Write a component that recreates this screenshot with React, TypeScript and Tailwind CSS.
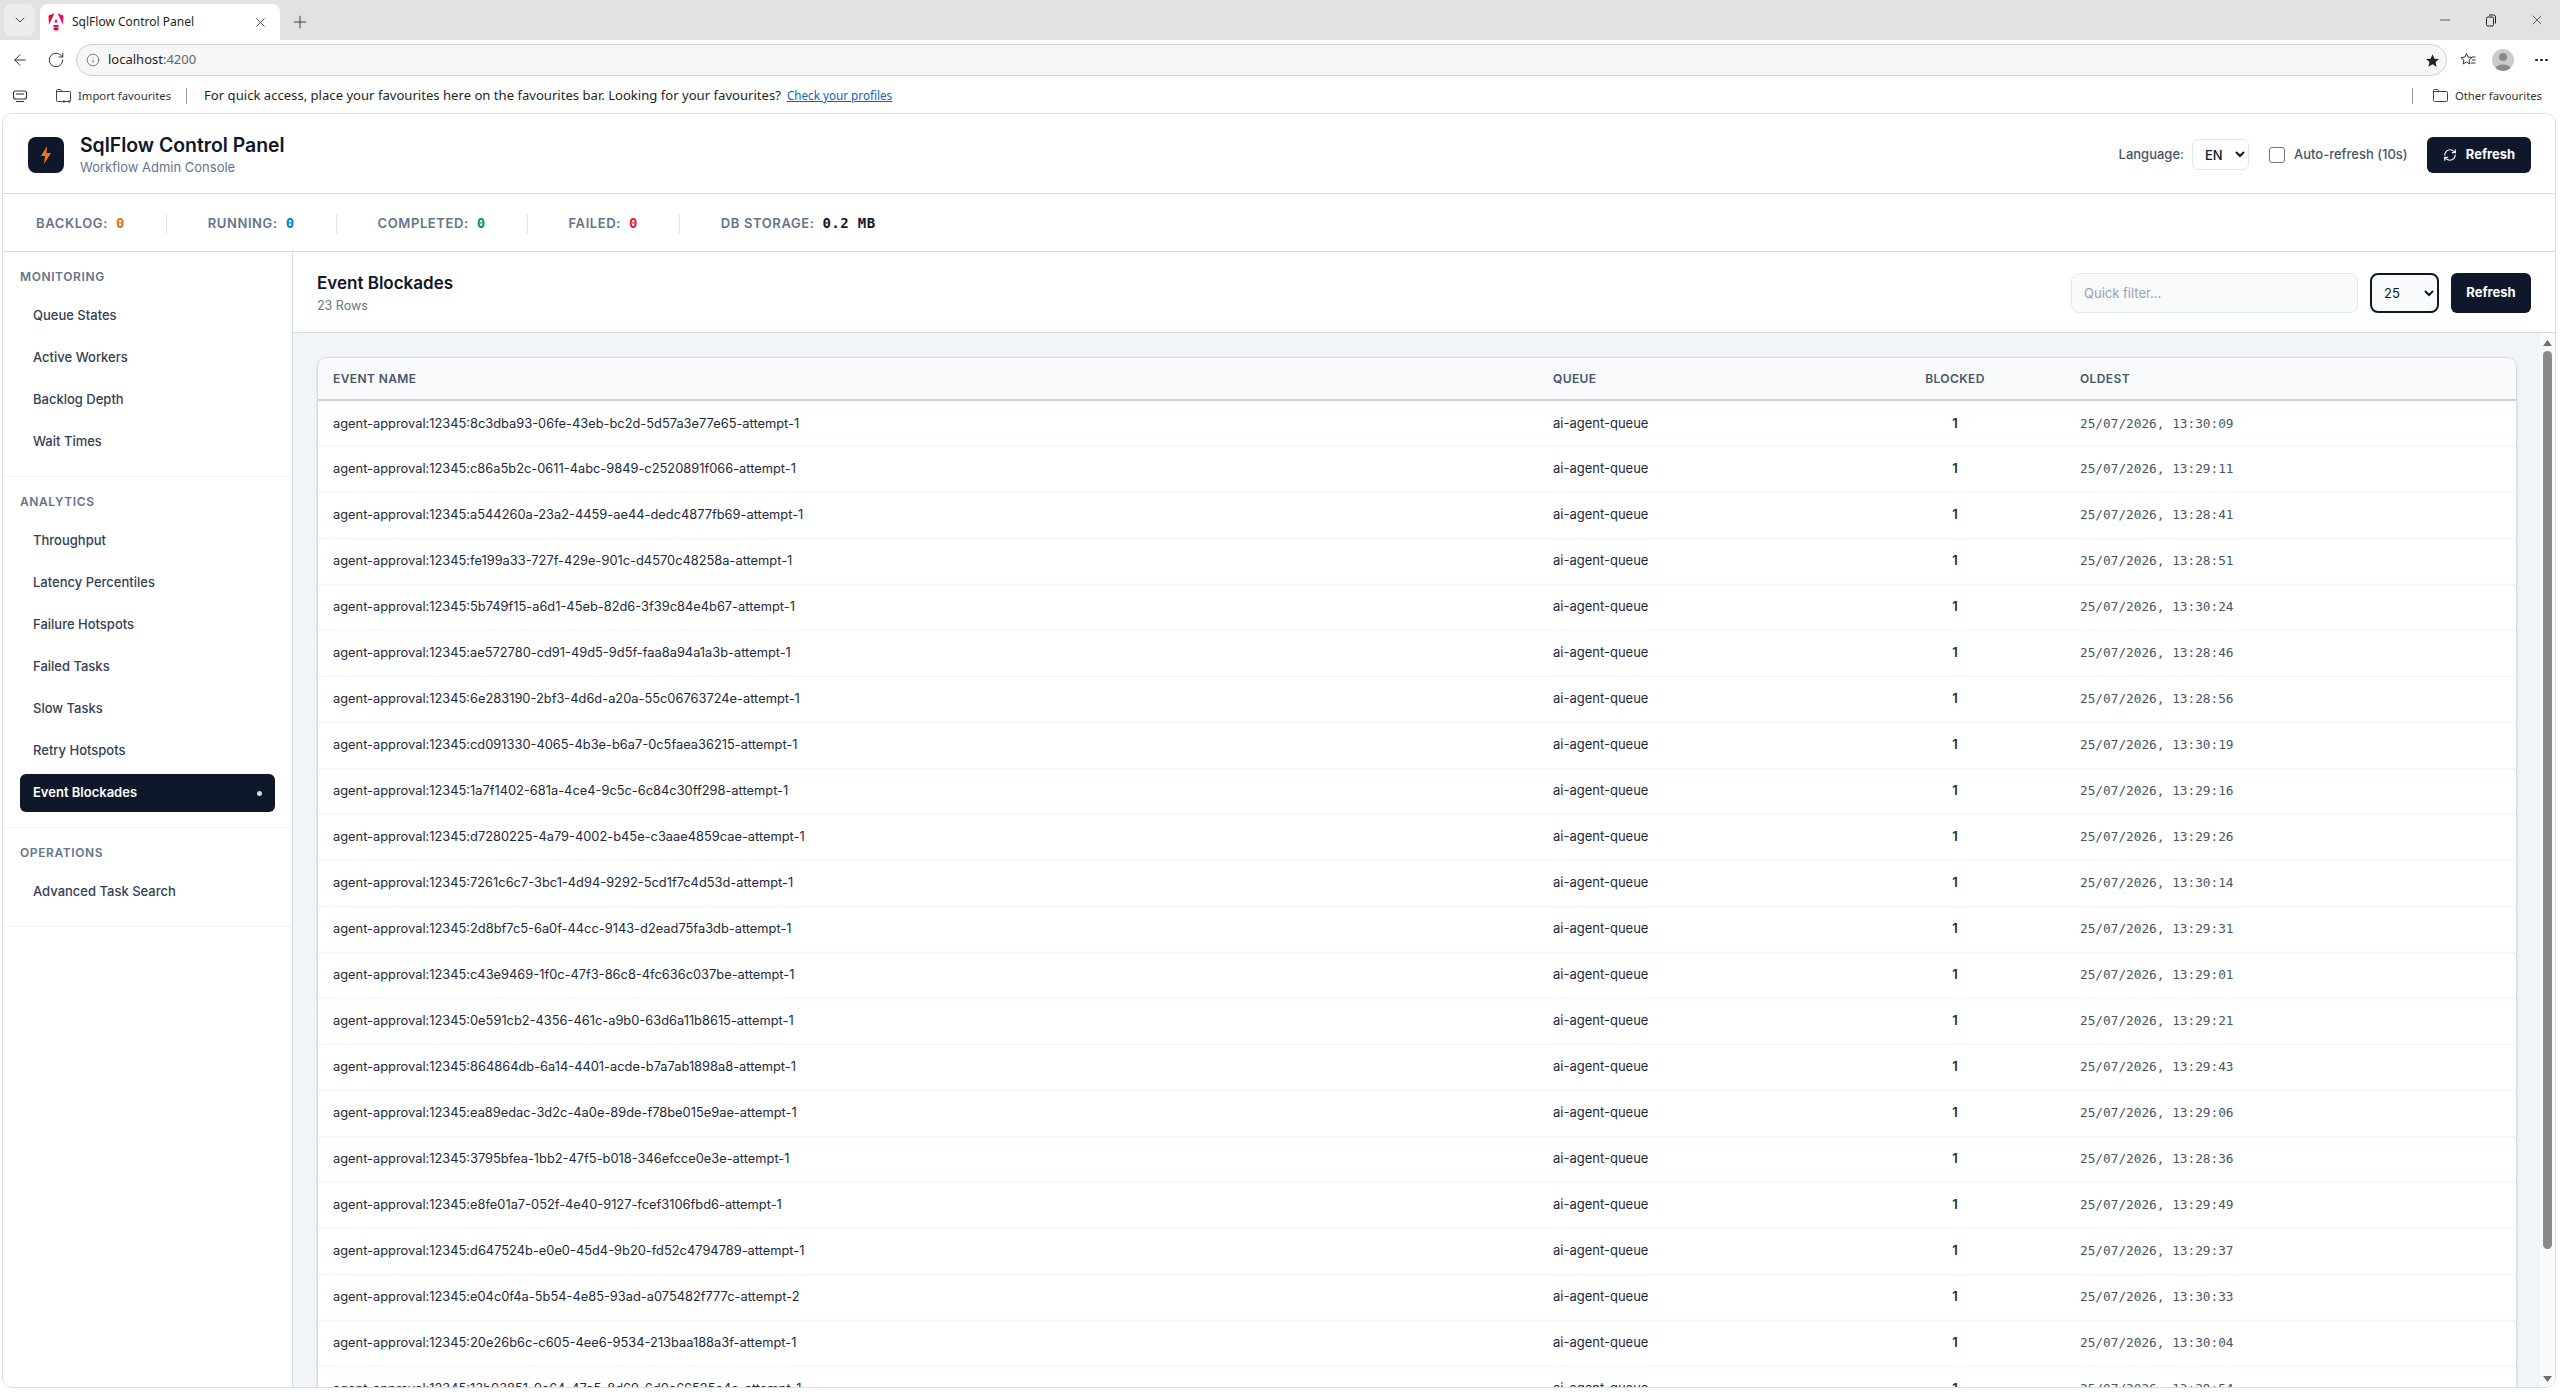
import React from "react";
import { ChevronDown, X, Plus, ArrowLeft, RotateCw, Info, Minus, RefreshCw } from "lucide-react";

const rows: [string, string][] = [
  ["8c3dba93-06fe-43eb-bc2d-5d57a3e77e65-attempt-1", "13:30:09"],
  ["c86a5b2c-0611-4abc-9849-c2520891f066-attempt-1", "13:29:11"],
  ["a544260a-23a2-4459-ae44-dedc4877fb69-attempt-1", "13:28:41"],
  ["fe199a33-727f-429e-901c-d4570c48258a-attempt-1", "13:28:51"],
  ["5b749f15-a6d1-45eb-82d6-3f39c84e4b67-attempt-1", "13:30:24"],
  ["ae572780-cd91-49d5-9d5f-faa8a94a1a3b-attempt-1", "13:28:46"],
  ["6e283190-2bf3-4d6d-a20a-55c06763724e-attempt-1", "13:28:56"],
  ["cd091330-4065-4b3e-b6a7-0c5faea36215-attempt-1", "13:30:19"],
  ["1a7f1402-681a-4ce4-9c5c-6c84c30ff298-attempt-1", "13:29:16"],
  ["d7280225-4a79-4002-b45e-c3aae4859cae-attempt-1", "13:29:26"],
  ["7261c6c7-3bc1-4d94-9292-5cd1f7c4d53d-attempt-1", "13:30:14"],
  ["2d8bf7c5-6a0f-44cc-9143-d2ead75fa3db-attempt-1", "13:29:31"],
  ["c43e9469-1f0c-47f3-86c8-4fc636c037be-attempt-1", "13:29:01"],
  ["0e591cb2-4356-461c-a9b0-63d6a11b8615-attempt-1", "13:29:21"],
  ["864864db-6a14-4401-acde-b7a7ab1898a8-attempt-1", "13:29:43"],
  ["ea89edac-3d2c-4a0e-89de-f78be015e9ae-attempt-1", "13:29:06"],
  ["3795bfea-1bb2-47f5-b018-346efcce0e3e-attempt-1", "13:28:36"],
  ["e8fe01a7-052f-4e40-9127-fcef3106fbd6-attempt-1", "13:29:49"],
  ["d647524b-e0e0-45d4-9b20-fd52c4794789-attempt-1", "13:29:37"],
  ["e04c0f4a-5b54-4e85-93ad-a075482f777c-attempt-2", "13:30:33"],
  ["20e26b6c-c605-4ee6-9534-213baa188a3f-attempt-1", "13:30:04"],
  ["13b03851-9a64-47a5-8d69-6d0c66525e4e-attempt-1", "13:29:54"],
];

const nav = [
  { title: "Monitoring", items: ["Queue States", "Active Workers", "Backlog Depth", "Wait Times"] },
  { title: "Analytics", items: ["Throughput", "Latency Percentiles", "Failure Hotspots", "Failed Tasks", "Slow Tasks", "Retry Hotspots", "Event Blockades"] },
  { title: "Operations", items: ["Advanced Task Search"] },
];

const stats = [
  { label: "Backlog:", value: "0", color: "text-[#d97706]" },
  { label: "Running:", value: "0", color: "text-[#0284c7]" },
  { label: "Completed:", value: "0", color: "text-[#059669]" },
  { label: "Failed:", value: "0", color: "text-[#e11d48]" },
  { label: "DB Storage:", value: "0.2 MB", color: "text-[#0f172a]" },
];

function AngularIcon() {
  return (
    <svg width="16" height="18" viewBox="0 0 16 18">
      <defs>
        <linearGradient id="ng" x1="0" y1="0" x2="1" y2="1">
          <stop offset="0" stopColor="#e40035" />
          <stop offset="0.5" stopColor="#f60a48" />
          <stop offset="1" stopColor="#a719ea" />
        </linearGradient>
      </defs>
      <path d="M15.5 2.8 15 11.8 9.6 0.2ZM11 13.4l-3 1.7-3-1.7.6-1.5h4.8ZM8 5.4l1.7 4.2H6.3ZM.5 2.8 6.4.2 1 11.8Z" fill="url(#ng)" />
      <path d="M5 15h6l-1.5 2.5h-3Z" fill="#e40035" />
    </svg>
  );
}

function FolderIcon({ arrows }: { arrows?: boolean }) {
  return (
    <svg width="17" height="16" viewBox="0 0 17 16" fill="none" stroke="#444" strokeWidth="1">
      <path d="M1.5 4V2.5a1 1 0 0 1 1-1h3l1.5 2h7.500a1 1 0 0 1 1 1v8a1 1 0 0 1-1 1H2.500a1 1 0 0 1-1-1Z" />
      <path d="M1.500 3.500H7" />
      {arrows && <path d="M8 13.500h7M9.500 12l-1.500 1.500 1.500 1.500M13.500 12l1.500 1.500-1.500 1.500" fill="none" />}
    </svg>
  );
}

function BrowserChrome() {
  return (
    <div className="font-['Noto_Sans',sans-serif] text-[#1f1f1f]">
      <div className="h-10 bg-[#e2e2e2] flex items-end relative">
        <div className="w-[31px] h-8 ml-1 mb-1 rounded-lg bg-[#ececec] flex items-center justify-center self-end">
          <ChevronDown size={16} strokeWidth={1.25} />
        </div>
        <div className="w-[240px] h-9 ml-[5px] bg-white rounded-t-lg flex items-center pl-[8px] pr-3">
          <AngularIcon />
          <span className="ml-2 text-[12px] whitespace-nowrap">SqlFlow Control Panel</span>
          <X size={15} strokeWidth={1.25} className="ml-auto" />
        </div>
        <div className="ml-[10px] mb-[8px]"><Plus size={20} strokeWidth={1} /></div>
        <div className="ml-auto flex items-center h-10 pr-[15px] gap-[30px]">
          <Minus size={16} strokeWidth={1} />
          <svg width="16" height="16" viewBox="0 0 16 16" fill="none" stroke="#222" strokeWidth="1"><rect x="3.500" y="5" width="7" height="9" rx="1.500" /><path d="M6 3h4.500a2 2 0 0 1 2 2v6.500" /></svg>
          <X size={16} strokeWidth={1} />
        </div>
      </div>
      <div className="h-9 bg-white flex items-center pt-1">
        <div className="w-[76px] flex items-center pl-[11px] gap-[18px] shrink-0">
          <ArrowLeft size={18} strokeWidth={1.2} />
          <RotateCw size={18} strokeWidth={1.2} />
        </div>
        <div className="w-[2371px] h-8 rounded-full border border-[#cfcfcf] bg-[#f7f7f7] flex items-center pl-[9px] pr-[6px] shrink-0">
          <Info size={14} strokeWidth={1.25} className="text-[#555]" />
          <span className="ml-[8px] text-[13px]">localhost<span className="text-[#666]">:4200</span></span>
          <svg className="ml-auto" width="15" height="15" viewBox="0 0 24 24" fill="#222"><path d="M12 2l3 7 7.500.6-5.700 4.900 1.800 7.500L12 18l-6.600 4 1.800-7.500L1.500 9.600 9 9Z" /></svg>
        </div>
        <div className="flex items-center ml-[13px] gap-[16px]">
          <svg width="16" height="16" viewBox="0 0 16 16" fill="none" stroke="#333" strokeWidth="1"><path d="M6.500 1.500l1.600 3.600 3.900.4-2.900 2.600.8 3.900-3.400-2-3.400 2 .8-3.900L1 5.500l3.900-.4Z" /><path d="M12 5h3.500M12 8h3.500M11 11h4.500" /></svg>
          <svg width="22" height="22" viewBox="0 0 22 22"><circle cx="11" cy="11" r="11" fill="#cccbc9" /><circle cx="11" cy="8" r="4" fill="#8c8a88" /><path d="M3.500 19a8 5.500 0 0 1 15 0 11 11 0 0 1-15 0Z" fill="#8c8a88" /></svg>
          <div className="ml-[5px] flex gap-[2.500px]">
            <span className="w-[2.500px] h-[2.500px] rounded-full bg-[#222]" />
            <span className="w-[2.500px] h-[2.500px] rounded-full bg-[#222]" />
            <span className="w-[2.500px] h-[2.500px] rounded-full bg-[#222]" />
          </div>
        </div>
      </div>
      <div className="h-[37px] bg-white flex items-center pt-[3px] text-[11.700px] whitespace-nowrap">
        <div className="ml-3 w-4 flex justify-center">
          <svg width="16" height="14" viewBox="0 0 16 14" fill="none" stroke="#333" strokeWidth="1.100"><rect x="1.500" y="2" width="13" height="8" rx="2" /><path d="M4 12.500h8" /><path d="M4 5h8" /></svg>
        </div>
        <div className="ml-[27px]"><FolderIcon arrows /></div>
        <span className="ml-[6px] text-[#333] text-[11.300px]">Import favourites</span>
        <span className="ml-[15px] w-px h-4 bg-[#999]" />
        <span className="ml-[17px] text-[13.100px]">For quick access, place your favourites here on the favourites bar. Looking for your favourites?</span>
        <span className="ml-[6px] text-[#0f5fc0] underline">Check your profiles</span>
        <div className="ml-auto flex items-center pr-[18px]">
          <span className="w-px h-4 bg-[#999] mr-[19px]" />
          <FolderIcon />
          <span className="ml-[6px] text-[#333] text-[11.300px]">Other favourites</span>
        </div>
      </div>
    </div>
  );
}

function Triangle({ down }: { down?: boolean }) {
  return (
    <svg width="9" height="6" viewBox="0 0 9 6" fill="#6f6f6f">
      <path d={down ? "M0 0h9L4.500 6Z" : "M0 6h9L4.500 0Z"} />
    </svg>
  );
}

export default function App() {
  return (
    <div className="h-screen flex flex-col overflow-hidden bg-white font-[Inter,sans-serif] text-[#0f172a]">
      <BrowserChrome />
      <div className="flex-1 min-h-0 ml-[2px] mr-1 mb-1 flex flex-col border border-[#dcdfe4] rounded-t-[10px] rounded-b-[10px] overflow-hidden bg-white">
        <header className="h-[80px] shrink-0 border-b border-[#d5dbe3] flex items-center pt-0.5 pl-[25px] pr-[24px]">
          <div className="w-9 h-9 rounded-lg bg-[#0f172a] flex items-center justify-center">
            <svg width="12" height="18" viewBox="0 0 12 18"><path d="M7 0 1 10h4l-1 8 7-11H6.500Z" fill="#f97316" /></svg>
          </div>
          <div className="ml-4">
            <div className="text-[19.400px] leading-[24px] font-semibold">SqlFlow Control Panel</div>
            <div className="text-[13px] leading-[18px] mt-px text-[#64748b]">Workflow Admin Console</div>
          </div>
          <div className="ml-auto flex items-center">
            <span className="text-[13px] font-medium text-[#475569]">Language:</span>
            <select className="ml-2 w-[57px] h-[31px] border border-[#e2e8f0] rounded-md bg-white text-[13px] font-medium pl-2">
              <option>EN</option>
            </select>
            <span className="ml-5 w-4 h-4 rounded-[3px] border border-[#767676] bg-white" />
            <span className="ml-[9px] text-[13px] font-medium text-[#475569] w-[112px] whitespace-nowrap">Auto-refresh (10s)</span>
            <button className="ml-[21px] w-[104px] h-9 rounded-md bg-[#0f172a] text-white text-[13px] font-bold flex items-center justify-center gap-[9px]">
              <RefreshCw size={14} strokeWidth={2} />
              Refresh
            </button>
          </div>
        </header>
        <div className="h-[58px] shrink-0 border-b border-[#d5dbe3] flex items-center pt-0.5 pl-[33px] text-[13px] font-semibold uppercase tracking-[0.6px] text-[#64748b]">
          {stats.map((s, i) => (
            <React.Fragment key={s.label}>
              {i > 0 && <span className="w-px h-5 bg-[#dfe3e8] mx-[41px]" />}
              <span className="whitespace-nowrap flex items-center">
                {s.label}
                <span className={`ml-[8px] font-['DejaVu_Sans_Mono',monospace] font-bold normal-case text-[14px] tracking-[0.4px] ${s.color}`}>{s.value}</span>
              </span>
            </React.Fragment>
          ))}
        </div>
        <div className="flex-1 min-h-0 flex">
          <aside className="w-[290px] shrink-0 border-r border-[#d5dbe3]">
            {nav.map((sec) => (
              <div key={sec.title} className="px-[17px] pt-[17px] pb-[15px] border-b border-[#f1f3f6]">
                <div className="text-[12px] leading-4 font-semibold uppercase tracking-[0.6px] text-[#64748b] mb-3">{sec.title}</div>
                <div className="flex flex-col gap-1">
                  {sec.items.map((it) => {
                    const active = it === "Event Blockades";
                    return (
                      <div key={it} className={`h-[38px] rounded-md px-[13px] flex items-center justify-between text-[13px] ${active ? "bg-[#0f172a] text-white font-semibold" : "text-[#334155] font-medium"}`}>
                        {it}
                        {active && <span className="w-[5px] h-[5px] rounded-full bg-[#d5d9df]" />}
                      </div>
                    );
                  })}
                </div>
              </div>
            ))}
          </aside>
          <main className="flex-1 min-w-0 flex flex-col">
            <div className="h-[81px] shrink-0 border-b border-[#d5dbe3] flex items-center pt-0.5 pl-6 pr-[24px]">
              <div>
                <div className="text-[17px] leading-[22px] font-semibold">Event Blockades</div>
                <div className="text-[12.500px] leading-[18px] mt-[3px] text-[#64748b]">23 Rows</div>
              </div>
              <div className="ml-auto flex items-center gap-3">
                <input placeholder="Quick filter..." className="w-[287px] h-10 rounded-lg border border-[#e2e8f0] bg-[#f8fafc] px-3 text-[13px] placeholder:text-[#94a3b8] outline-none" />
                <select defaultValue="25" className="w-[69px] h-10 rounded-lg border-2 border-[#0f172a] bg-[#f8fafc] text-[13px] pl-2">
                  <option>25</option>
                </select>
                <button className="w-20 h-10 rounded-md bg-[#0f172a] text-white text-[13px] font-bold">Refresh</button>
              </div>
            </div>
            <div className="flex-1 min-h-0 flex">
              <div className="flex-1 min-w-0 bg-[#f1f5f9] pt-6 pl-6 pr-6 overflow-hidden">
                <div className="w-[2200px] bg-white border border-[#d5dbe3] rounded-t-[10px] shadow-sm">
                  <table className="w-full table-fixed border-collapse">
                    <colgroup>
                      <col className="w-[1219px]" />
                      <col className="w-[309px]" />
                      <col className="w-[218px]" />
                      <col />
                    </colgroup>
                    <thead>
                      <tr className="h-[42px] bg-[#f8fafc] border-b-2 border-[#cbd5e1] text-[12px] font-semibold uppercase tracking-[0.4px] text-[#475569]">
                        <th className="text-left pl-[15px] font-semibold rounded-tl-[10px]">Event Name</th>
                        <th className="text-left pl-4 font-semibold">Queue</th>
                        <th className="text-center font-semibold">Blocked</th>
                        <th className="text-left pl-4 font-semibold rounded-tr-[10px]">Oldest</th>
                      </tr>
                    </thead>
                    <tbody>
                      {rows.map(([id, t]) => (
                        <tr key={id} className="h-[46px] border-b border-[#f1f5f9] text-[13px] text-[#1e293b]">
                          <td className="pl-[15px] whitespace-nowrap text-[12.850px]">agent-approval:12345:{id}</td>
                          <td className="pl-4">ai-agent-queue</td>
                          <td className="text-center font-semibold">1</td>
                          <td className="pl-4 font-['DejaVu_Sans_Mono',monospace] text-[12.750px] text-[#475569]">25/07/2026, {t}</td>
                        </tr>
                      ))}
                    </tbody>
                  </table>
                </div>
              </div>
              <div className="w-[15px] shrink-0 bg-[#fafafa] flex flex-col items-center pt-[7px]">
                <Triangle />
                <div className="mt-[5px] w-[9px] h-[898px] rounded-full bg-[#8a8a8a]" />
                <div className="mt-auto mb-[5px]"><Triangle down /></div>
              </div>
            </div>
          </main>
        </div>
      </div>
    </div>
  );
}
